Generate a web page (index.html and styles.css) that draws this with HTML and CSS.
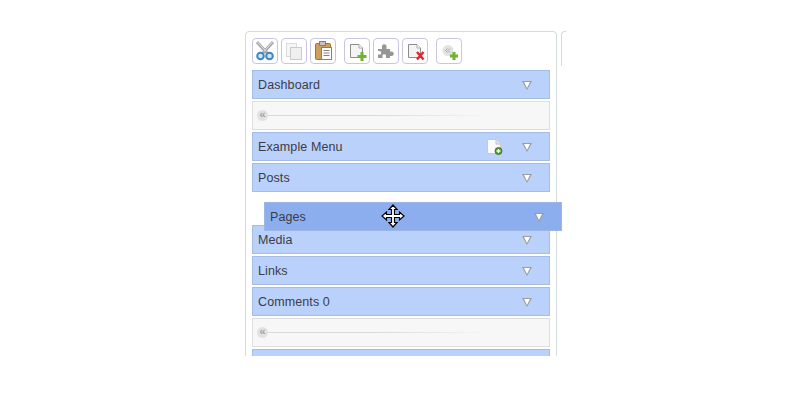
FILE: index.html
```html
<!DOCTYPE html>
<html>
	<head>
		<title>Menu Editor</title>
		<link rel="stylesheet" href="styles.css">
	</head>
	<body>
		<div class="stage">
			<section class="panel">
				<div class="toolbar">
					<div class="group">
						<button class="tool">
							<svg width="24" height="24" viewBox="0 0 24 24">
								<path d="M4 3 L14 14 M20 3 L10 14" stroke="#a4a4a4" stroke-width="3" fill="none"/>
								<path d="M4.5 3 L13 12.5 M19.5 3 L11 12.5" stroke="#e4e4e4" stroke-width="1" fill="none"/>
								<circle cx="7.5" cy="17" r="3.3" fill="#cfe3f4" stroke="#3b86c4" stroke-width="2"/>
								<circle cx="16.5" cy="17" r="3.3" fill="#cfe3f4" stroke="#3b86c4" stroke-width="2"/>
							</svg>
						</button>
						<button class="tool">
							<svg width="24" height="24" viewBox="0 0 24 24">
								<rect x="4.5" y="4.5" width="10" height="13" fill="#f6f6f6" stroke="#dcdcdc"/>
								<rect x="8.5" y="8.5" width="11" height="12" fill="#f0f0f0" stroke="#cacaca"/>
							</svg>
						</button>
						<button class="tool">
							<svg width="24" height="24" viewBox="0 0 24 24">
								<rect x="4.5" y="4.5" width="15" height="16" rx="1" fill="#cf9d5c" stroke="#a0712f"/>
								<rect x="8.5" y="2.5" width="6" height="4" fill="#c4c4c4" stroke="#808080"/>
								<rect x="10.5" y="8.5" width="10" height="12" fill="#fff" stroke="#808080"/>
								<path d="M12.5 11.5 h6 M12.5 14 h6 M12.5 16.5 h6" stroke="#808080" fill="none"/>
							</svg>
						</button>
					</div>
					<div class="group">
						<button class="tool">
							<svg width="24" height="24" viewBox="0 0 24 24">
								<path d="M5.5 5.5 H14 L17.5 9 V18.5 H5.5 Z" fill="#f4f4f4" stroke="#8c8c8c"/>
								<path d="M14 5.5 V9 H17.5" fill="#fff" stroke="#aaa"/>
								<path d="M15.5 13 h3 v3 h3 v3 h-3 v3 h-3 v-3 h-3 v-3 h3 Z" fill="#6fb52c"/>
							</svg>
						</button>
						<button class="tool">
							<svg width="24" height="24" viewBox="0 0 24 24">
								<path d="M4 10 h4 v-2 a2.3 2.3 0 1 1 4.5 0 v2 h3.5 v2.5 h1 a2.3 2.3 0 1 1 0 4.5 h-1 v2 h-4 v-1.5 a1.8 1.8 0 1 0 -3.5 0 v1.5 h-4.5 v-3.5 h1 a1.8 1.8 0 1 0 0 -3.5 h-1 Z" fill="#969696"/>
							</svg>
						</button>
						<button class="tool">
							<svg width="24" height="24" viewBox="0 0 24 24">
								<path d="M5.5 5.5 H14 L17.5 9 V18.5 H5.5 Z" fill="#f4f4f4" stroke="#8c8c8c"/>
								<path d="M14 5.5 V9 H17.5" fill="#fff" stroke="#aaa"/>
								<path d="M14 13 L20.5 20.5 M20.5 13 L14 20.5" stroke="#e8202a" stroke-width="2.4" fill="none"/>
							</svg>
						</button>
					</div>
					<div class="group">
						<button class="tool">
							<svg width="24" height="24" viewBox="0 0 24 24">
								<circle cx="11" cy="11.5" r="5.5" fill="#e2e2e2"/>
								<path d="M10.5 9.5 L8.5 11.5 L10.5 13.5 M13 9.5 L11 11.5 L13 13.5" stroke="#a5a5a5" fill="none"/>
								<path d="M15.5 13 h3 v2.5 h2.5 v3 h-2.5 v2.5 h-3 v-2.5 h-2.5 v-3 h2.5 Z" fill="#6fb52c"/>
							</svg>
						</button>
					</div>
				</div>
				<ul class="rows">
					<li class="row"><span>Dashboard</span><i class="arrow"></i></li>
					<li class="slider"><b class="knob">«</b><i class="line"></i></li>
					<li class="row">
						<span>Example Menu</span>
						<svg class="add-doc" width="17" height="18" viewBox="0 0 17 18">
							<path d="M1.5 1.5 H10 L14.5 6 V15.5 H1.5 Z" fill="#fbfbfb" stroke="#c8c8c8"/>
							<path d="M10 1.5 V6 H14.5" fill="#e8e8e8" stroke="#c0c0c0"/>
							<circle cx="12.5" cy="13" r="3.5" fill="#4c9a2a" stroke="#3f7f24"/>
							<path d="M12.5 11 v4 M10.5 13 h4" stroke="#fff" stroke-width="1.3"/>
						</svg>
						<i class="arrow"></i>
					</li>
					<li class="row"><span>Posts</span><i class="arrow"></i></li>
					<li class="gap"></li>
					<li class="row"><span>Media</span><i class="arrow"></i></li>
					<li class="row"><span>Links</span><i class="arrow"></i></li>
					<li class="row"><span>Comments 0</span><i class="arrow"></i></li>
					<li class="slider"><b class="knob">«</b><i class="line"></i></li>
					<li class="row"></li>
				</ul>
			</section>
			<div class="next-panel"></div>
			<div class="row dragged">
				<span>Pages</span>
				<i class="arrow"></i>
				<svg class="cursor" width="24" height="24" viewBox="0 0 24 24">
					<path d="M12 1 L16 5.5 H13.5 V10.5 H18.5 V8 L23 12 L18.5 16 V13.5 H13.5 V18.5 H16 L12 23 L8 18.5 H10.5 V13.5 H5.5 V16 L1 12 L5.5 8 V10.5 H10.5 V5.5 H8 Z" fill="#fff" stroke="#000" stroke-width="1.2"/>
				</svg>
			</div>
		</div>
	</body>
</html>
```

FILE: styles.css
```css
* {
	box-sizing:border-box;
	margin:0;
	padding:0;
}
body {
	background:#fff;
	font-family:'Liberation Sans', Arial, sans-serif;
	font-size:12px;
	color:#3c3c48;
}
.stage {
	position:relative;
	display:flex;
	align-items:flex-start;
	gap:4px;
	height:356px;
	padding:31px 0 0 245px;
	overflow:hidden;
}

.panel {
	flex:none;
	width:312px;
	height:400px;
	padding:6px;
	background:#fff;
	border:1px solid #d3dbdb;
	border-radius:4px;
}
.next-panel {
	flex:none;
	width:5px;
	height:35px;
	border-top:1px solid #d3dbdb;
	border-left:1px solid #d3dbdb;
	border-top-left-radius:4px;
}

.toolbar {
	display:flex;
	gap:8px;
	margin-bottom:6px;
}
.group {
	display:flex;
	gap:3px;
}
.tool {
	display:flex;
	align-items:center;
	justify-content:center;
	width:26px;
	height:26px;
	background:#fff;
	border:1px solid #c9c5e2;
	border-radius:4px;
}

.rows {
	list-style:none;
}
.row {
	display:flex;
	align-items:center;
	height:29px;
	margin-bottom:2px;
	padding-left:5px;
	font-size:12.5px;
	letter-spacing:.1px;
	background:#b9d1fb;
	border:1px solid #a5bde4;
}
.row span {
	flex:1;
}
.arrow {
	position:relative;
	width:0;
	height:0;
	margin-top:2px;
	margin-right:17px;
	border-style:solid;
	border-width:9px 5px 0 5px;
	border-color:#9c9c9c transparent transparent transparent;
}
.arrow::after {
	content:'';
	position:absolute;
	left:-3.5px;
	top:-8px;
	width:0;
	height:0;
	border-style:solid;
	border-width:6px 3.5px 0 3.5px;
	border-color:#fff transparent transparent transparent;
}
.add-doc {
	margin-right:19px;
}
.gap {
	height:29px;
	margin-bottom:2px;
}

.slider {
	display:flex;
	align-items:center;
	height:29px;
	margin-bottom:2px;
	padding-left:4px;
	background:#f7f7f7;
	border:1px solid #dedede;
}
.knob {
	flex:none;
	width:11px;
	height:11px;
	border-radius:50%;
	background:#e2e2e2;
	color:#8c8c8c;
	font-size:11px;
	font-weight:normal;
	line-height:9px;
	text-align:center;
}
.line {
	width:222px;
	height:1px;
	background:linear-gradient(to right, #dadada 50%, #f7f7f7);
}

.dragged {
	position:absolute;
	left:264px;
	top:202px;
	width:298px;
	margin:0;
	background:#8daeee;
	border-color:#9db6e6;
}
.cursor {
	position:absolute;
	left:116px;
	top:1px;
}
```
